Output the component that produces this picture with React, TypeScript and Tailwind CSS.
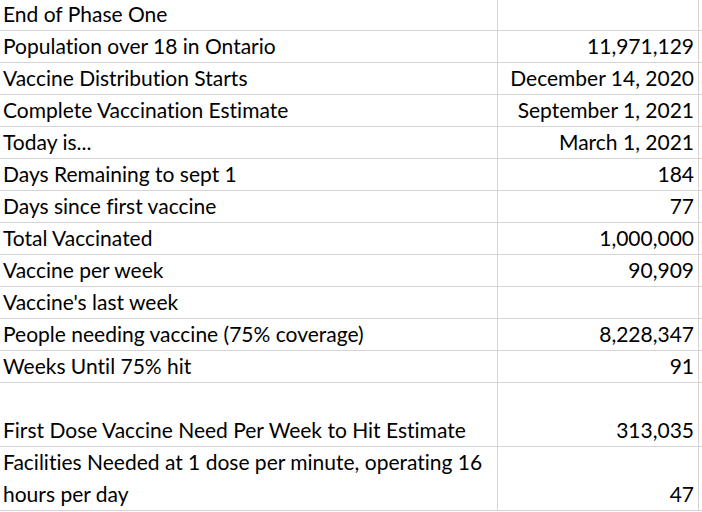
type Row = { label: React.ReactNode; value?: string; tall?: boolean };

const rows: Row[] = [
  { label: 'End of Phase One' },
  { label: 'Population over 18 in Ontario', value: '11,971,129' },
  { label: 'Vaccine Distribution Starts', value: 'December 14, 2020' },
  { label: 'Complete Vaccination Estimate', value: 'September 1, 2021' },
  { label: 'Today is...', value: 'March 1, 2021' },
  { label: 'Days Remaining to sept 1', value: '184' },
  { label: 'Days since first vaccine', value: '77' },
  { label: 'Total Vaccinated', value: '1,000,000' },
  { label: 'Vaccine per week', value: '90,909' },
  { label: "Vaccine's last week" },
  { label: 'People needing vaccine (75% coverage)', value: '8,228,347' },
  { label: 'Weeks Until 75% hit', value: '91' },
  { label: 'First Dose Vaccine Need Per Week to Hit Estimate', value: '313,035', tall: true },
  {
    label: (
      <>
        Facilities Needed at 1 dose per minute, operating 16
        <br />
        hours per day
      </>
    ),
    value: '47',
    tall: true,
  },
];

export default function App() {
  return (
    <div
      className="w-[702px] h-[512px] bg-white overflow-hidden text-black text-[21px] leading-[32px] [font-variant-ligatures:none]"
      style={{ fontFamily: 'Lato, "Open Sans", sans-serif' }}
    >
      {rows.map((row, i) => (
        <div
          key={i}
          className={`flex border-b border-[#d4d4d4] ${row.tall ? 'h-[64px]' : i === 0 ? 'h-[31px]' : 'h-[32px]'}`}
        >
          <div className="w-[498px] border-r border-[#d4d4d4] flex items-end pl-[3px] whitespace-nowrap">
            <div>{row.label}</div>
          </div>
          <div className="w-[201px] border-r border-[#d4d4d4] flex items-end justify-end pr-[4px]">
            {row.value && <div>{row.value}</div>}
          </div>
        </div>
      ))}
    </div>
  );
}
